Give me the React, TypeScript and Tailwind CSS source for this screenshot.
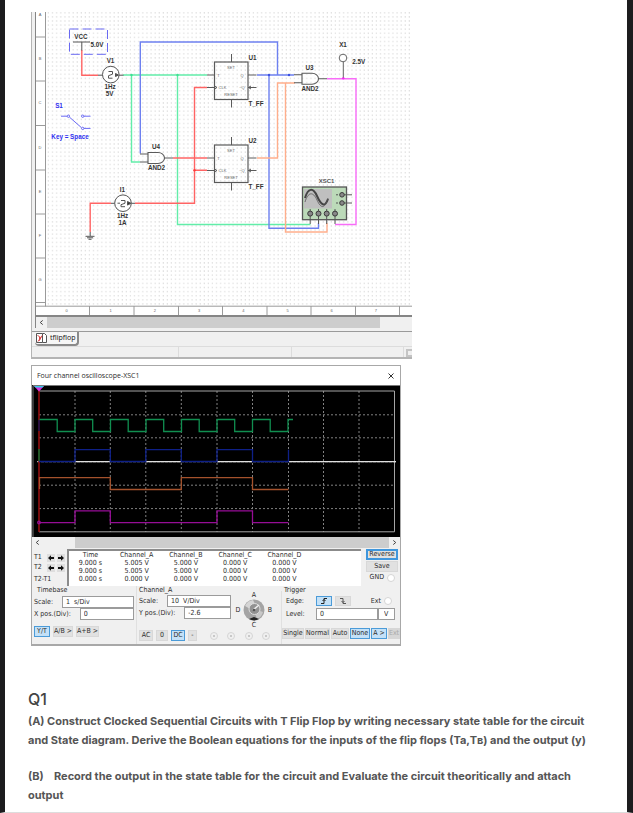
import React from "react";

type Pt = { x: number; y: number };

const dot = (x: number, y: number, fill: string) => (
  <circle key={`${x}-${y}`} cx={x} cy={y} r={1.2} fill={fill} />
);

function Label({ x, y, children, fill = "#333333", size = 6.3 }: Pt & { children: React.ReactNode; fill?: string; size?: number }) {
  return (
    <text x={x} y={y} fontSize={size} fontWeight="bold" textAnchor="middle" fill={fill} fontFamily="'Liberation Sans', Arial, sans-serif">
      {children}
    </text>
  );
}

function Small({ x, y, children, size = 4 }: Pt & { children: React.ReactNode; size?: number }) {
  return (
    <text x={x} y={y} fontSize={size} textAnchor="middle" fill="#666666" fontFamily="'Liberation Sans', Arial, sans-serif">
      {children}
    </text>
  );
}

function FlipFlop({ y, name }: { y: number; name: string }) {
  return (
    <g>
      <g fill="none" stroke="#5a5a5a" strokeWidth={1}>
        <rect x={214.5} y={y} width={33.5} height={37.5} strokeWidth={1.2} />
        <path d={`M231.5 ${y - 8}v8M231.5 ${y + 37.5}v8M207 ${y + 13}h7M207 ${y + 25.5}h8M248 ${y + 13}h8.5M248 ${y + 25.5}h8.5`} />
        <path d={`M214.5 ${y + 24}l2.5 1.5l-2.5 1.5M251 ${y + 24}l-2.5 1.5l2.5 1.5`} />
      </g>
      <Small x={231} y={y + 7}>SET</Small>
      <Small x={218.5} y={y + 14.5}>T</Small>
      <Small x={242} y={y + 14.5}>Q</Small>
      <Small x={222.5} y={y + 26.5}>CLK</Small>
      <Small x={242} y={y + 26.5}>~Q</Small>
      <Small x={231} y={y + 33.5}>RESET</Small>
      <Label x={252.5} y={y - 2}>{name}</Label>
      <Label x={256} y={y + 44}>T_FF</Label>
    </g>
  );
}

function AndGate({ x, y }: Pt) {
  return (
    <path
      d={`M${x - 8} ${y + 1.5}h8M${x - 8} ${y + 9.5}h8M${x + 16.5} ${y + 5.5}h8.5M${x} ${y}h10a6.5 5.5 0 0 1 0 11h-10z`}
      fill="none"
      stroke="#5a5a5a"
      strokeWidth={1.1}
    />
  );
}

function Schematic() {
  return (
    <svg viewBox="36 12 376 303" className="block h-auto w-full bg-white" role="img" aria-label="T flip-flop circuit schematic">
      <defs>
        <pattern id="grid" x="45" y="12" width="4.1" height="4.1" patternUnits="userSpaceOnUse">
          <rect x="3" y="0.3" width="1" height="1" fill="#c8c8c8" />
        </pattern>
      </defs>
      <rect x="46" y="12" width="366" height="294" fill="url(#grid)" />
      <path
        d="M45.5 12V306.5M36 306.2H412M36 37h9.5M36 81h9.5M36 125.5h9.5M36 170h9.5M36 214h9.5M36 258h9.5M36 302.5h9.5M89.5 306v9M134 306v9M178.5 306v9M222.5 306v9M267 306v9M311 306v9M355.5 306v9M399.5 306v9"
        stroke="#9a9a9a"
        fill="none"
      />
      {["A", "B", "C", "D", "E", "F", "G"].map((c, i) => (
        <Small key={c} x={40} y={16 + i * 44.2}>{c}</Small>
      ))}
      {[0, 1, 2, 3, 4, 5, 6, 7].map((n) => (
        <Small key={n} x={66.5 + n * 44.2} y={312}>{n}</Small>
      ))}

      <g fill="none" strokeWidth={1.4}>
        <g stroke="#62eda9">
          <path d="M123 75H207M131.5 75V162H140M177.5 75V224.5H310.5" />
        </g>
        <g stroke="#6d80f0">
          <path d="M140.3 153.5V42H277.5V75M257 75H294M269 75V228.3H318.5V223" />
        </g>
        <g stroke="#ff6464">
          <path d="M81.8 50V75.2H98M173 158H207M207 87.5H194.5V203.3H135M194.5 170.3H207M111 203.3H90.2V232" />
        </g>
        <g stroke="#ffae8c">
          <path d="M257 158H277.5V83H295M285.5 83V232H327V223" />
        </g>
        <g stroke="#f86cf8">
          <path d="M327 78.7H356V224.5H335" />
        </g>
      </g>
      {dot(131.5, 75, "#3fe093")}
      {dot(177.5, 75, "#3fe093")}
      {dot(269, 75, "#3b50e0")}
      {dot(289, 75, "#3b50e0")}
      {dot(194.5, 170.3, "#ff3b3b")}
      {dot(343.3, 78.3, "#f32cf3")}

      {/* supply */}
      <rect x="69.5" y="29" width="38" height="25.3" fill="none" stroke="#6969f2" strokeDasharray="9 4" />
      <path d="M73 42h17M81.8 42v8.5" stroke="#555" fill="none" />
      <Label x={81} y={38.8}>VCC</Label>
      <Label x={97} y={47.3}>5.0V</Label>

      {/* clock sources */}
      <g fill="white" stroke="#555">
        <path d="M98 75.2h5M119 75.2h4.5M111 203.3h4M131 203.3h4" />
        <circle cx="110.8" cy="74.6" r="8.3" />
        <circle cx="123" cy="203.2" r="8.3" />
        <path d="M108.500 71.500h4v2.700l-4 1.500v2.500h4" fill="none" />
        <path d="M115.500 73.500l3 1.500-3 1.500z" fill="#555" />
        <path d="M117.5 203.2h2.5M121 200.5h4v2.7l-4 1.5v2h4" fill="none" />
        <path d="M127.5 201.5l3.5 1.8-3.5 1.8z" fill="#333" />
      </g>
      <Label x={110.5} y={63.3}>V1</Label>
      <Label x={110} y={89.3}>1Hz</Label>
      <Label x={109.5} y={96.3}>5V</Label>
      <Label x={122.5} y={192}>I1</Label>
      <Label x={122.5} y={218}>1Hz</Label>
      <Label x={122.5} y={225.2}>1A</Label>
      <path d="M90.2 232v4M85.5 236.3h9M87 237.8h6M88.5 239.3h3" stroke="#555" fill="none" />

      {/* switch */}
      <g fill="none" stroke="#6a6af5">
        <path d="M61 116.2h6M69.5 117.2l11.8 10.3M84 116.2h6.5M84 128.4h6.5" />
        <circle cx="68.4" cy="116.2" r="1.2" />
        <circle cx="82.7" cy="116.2" r="1.2" />
        <circle cx="82.7" cy="128.4" r="1.2" />
      </g>
      <Label x={59} y={107.8} fill="#3030f0">S1</Label>
      <Label x={70} y={139} fill="#3030f0">Key = Space</Label>

      <FlipFlop y={62} name="U1" />
      <FlipFlop y={145} name="U2" />
      <AndGate x={148} y={152.5} />
      <Label x={156} y={149}>U4</Label>
      <Label x={156.5} y={169.5}>AND2</Label>
      <AndGate x={302} y={73.3} />
      <Label x={309.5} y={70.3}>U3</Label>
      <Label x={310} y={90.8}>AND2</Label>

      {/* probe */}
      <circle cx="343" cy="58" r="3.8" fill="white" stroke="#666" />
      <path d="M343.3 62v15.5" stroke="#666" />
      <Label x={343} y={46.8}>X1</Label>
      <Label x={358.8} y={63.8}>2.5V</Label>

      {/* oscilloscope instrument */}
      <Label x={326.5} y={183} fill="#555" size={6}>XSC1</Label>
      <rect x="302.5" y="187" width="44" height="32.7" fill="#bcdab9" stroke="#555" strokeWidth="1.3" />
      <rect x="304" y="189" width="28" height="19.5" fill="#bfbfbf" />
      <path d="M305 198c3-10 8-11 12-2s8 12 11 3" fill="none" stroke="#444" strokeWidth="2" />
      <path d="M305 202c3-10 8-11 12-2s8 9 11-2" fill="none" stroke="#555" strokeWidth="0.8" />
      {[310.2, 318.5, 326.7, 335].map((x) => (
        <g key={x}>
          <path d={`M${x} 209v15`} stroke="#555" />
          <circle cx={x} cy="213.6" r="2.5" fill="#888" stroke="#3b3b3b" />
        </g>
      ))}
      {[194.8, 203].map((y) => (
        <g key={y}>
          <path d={`M336 ${y}h2M342 ${y}h10`} stroke="#555" />
          <circle cx="342" cy={y} r="2.3" fill="#888" stroke="#3b3b3b" />
        </g>
      ))}
    </svg>
  );
}

function ScrollBar({ thumb }: { thumb: string }) {
  return (
    <div className="flex h-[11px] items-stretch bg-[#f0f0f0]">
      <button aria-label="Scroll left" className="flex w-[11px] items-center justify-center">
        <svg viewBox="0 0 6 6" className="size-[5px]"><path d="M4.500 .5L1.500 3l3 2.500" fill="none" stroke="#444" strokeWidth="1.200" /></svg>
      </button>
      <div className={`bg-[#cdcdcd] ${thumb}`} />
    </div>
  );
}

function CircuitWindow() {
  return (
    <section className="w-full max-w-[381px] border-b-2 border-l border-[#b4b4b4] bg-[#f0f0f0]">
      <div className="ml-[3px] border-b-2 border-l border-[#858585]">
        <Schematic />
      </div>
      <div className="ml-[3px] border-l border-[#858585]">
        <ScrollBar thumb="mr-8 flex-1" />
      </div>
      <div className="mt-[3px] flex border-t border-[#9a9a9a]">
        <button className="ml-[3px] flex h-[14px] items-center gap-[3px] rounded-b-sm border-r-2 border-b-2 border-[#8a8a8a] bg-[#f6f6f6] px-px font-['Noto_Sans',sans-serif] text-[7px] text-[#222]">
          <svg viewBox="0 0 11 10" className="h-[10px] w-[11px]">
            <path d="M.5.5h6v9h-6zM6.500.5h2l2 2v7h-4" fill="white" stroke="#555" />
            <path d="M1.500 2.500l2 1v4l2-4M2 8.500l4-6" fill="none" stroke="#dc4646" />
          </svg>
          tflipflop
        </button>
      </div>
      <div className="flex h-[11px] border-t border-[#dcdcdc]">
        <div className="flex-[147] border-r border-[#dcdcdc]" />
        <div className="flex-[112] border-r border-[#dcdcdc]" />
        <div className="flex-[112] border-r border-[#dcdcdc]" />
        <div className="mt-[2px] ml-[2px] w-[6px] border-2 border-r-0 border-[#c4c4c4]" />
      </div>
    </section>
  );
}

const columns = [75, 110.3, 145.8, 181.3, 217, 252.5, 288.5, 323.5, 359];
const squareWave = (() => {
  let d = "M39.500 419.500";
  for (let i = 0; i < 7; i++) {
    const left = 39.5 + i * 35.5;
    d += `H${left + 17.7}V431.5H${left + 35.5}V419.5`;
  }
  return d + "H293";
})();

function ScopeScreen() {
  return (
    <svg viewBox="32 385 368 152" className="block h-auto w-full bg-black" role="img" aria-label="Oscilloscope traces">
      <path d="M33 537V385.500H400" fill="none" stroke="#777" />
      <g fill="none" stroke="#818181" strokeDasharray="2 2">
        {columns.map((x) => <path key={x} d={`M${x} 391V532`} />)}
        {[414.8, 437.8, 485.2, 508.6].map((y) => <path key={y} d={`M39 ${y}H394`} />)}
      </g>
      <path d="M39 391H394.500V531.800H39" fill="none" stroke="#a5a5a5" />
      <path d="M37 461.700H396" stroke="#cfcfcf" strokeDasharray="3 1" />
      <path d="M75 461.700H110M146 461.700H181M217 461.700H252M289 461.700H396" stroke="#e0e0e0" strokeWidth="1.200" />
      <g fill="none" strokeWidth="1.300">
        <path d="M39 389V532" stroke="#9c1212" strokeWidth="1.500" />
        <path d="M39 420V431" stroke="#101050" strokeWidth="1.500" />
        <path d="M39 449V461" stroke="#087030" strokeWidth="1.500" />
        <path d={squareWave} stroke="#108f50" />
        <path d="M39 461.500H75V449.700H110.300V461.500H145.800V449.700H181.300V461.500H217V449.700H252.500V461.500H288.500V449.700" stroke="#0e2088" />
        <path d="M39.500 489V477.700H110.300V489.500H181.300V477.700H252.500V489.500H288.500" stroke="#a5522c" />
        <path d="M39 522.600H75V510.800H110.300V522.600H217V510.800H252.500V522.600H288.500" stroke="#960d96" />
        <circle cx="39" cy="522.500" r="1.300" stroke="#960d96" />
      </g>
      <path d="M34 386h10l-5 5.500z" fill="#d930e0" />
      <path d="M34 386h10l-1.500 1.600h-7z" fill="#35c8e6" />
    </svg>
  );
}

const buttonBase = "flex items-center justify-center leading-none whitespace-nowrap";
const plain = "border border-[#d8d8d8] bg-[#e1e1e1]";
const active = "border border-[#4b9bd8] bg-[#c4e1f7]";
const focused = "border-2 border-[#3f96dc] bg-[#e1e1e1]";

function Btn({ children, on, focus, size = "", label }: { children: React.ReactNode; on?: boolean; focus?: boolean; size?: string; label?: string }) {
  return (
    <button aria-label={label} aria-pressed={on} className={`${buttonBase} ${on ? active : focus ? focused : plain} ${size}`}>
      {children}
    </button>
  );
}

function Field({ id, label, value, top = "" }: { id: string; label: string; value: string; top?: string }) {
  return (
    <div className={`flex h-[12px] items-center ${top}`}>
      <label htmlFor={id} className="mr-[9px] whitespace-nowrap">{label}</label>
      <input id={id} defaultValue={value} className="h-[12px] w-0 min-w-0 flex-1 border border-[#9b9b9b] bg-white px-[3px]" />
    </div>
  );
}

function Radio({ name, label }: { name: string; label: string }) {
  return <input type="radio" name={name} aria-label={label} className="size-[8px] appearance-none rounded-full border border-[#d5d5d5] bg-white" />;
}

function Arrows({ name }: { name: string }) {
  return (
    <span className="flex gap-[2px]">
      {["back", "forward"].map((dir) => (
        <button key={dir} aria-label={`${name} ${dir}`} className="flex size-[8px] items-center justify-center bg-[#dedede]">
          <svg viewBox="0 0 6 6" className={dir === "back" ? "size-[6px]" : "size-[6px] rotate-180"}>
            <path d="M0 3l3-2.800v1.800h3v2h-3v1.800z" fill="#111" />
          </svg>
        </button>
      ))}
    </span>
  );
}

const headers = ["Time", "Channel_A", "Channel_B", "Channel_C", "Channel_D"];
const rows = [
  ["9.000 s", "5.005 V", "5.000 V", "0.000 V", "0.000 V"],
  ["9.000 s", "5.005 V", "5.000 V", "0.000 V", "0.000 V"],
  ["0.000 s", "0.000 V", "0.000 V", "0.000 V", "0.000 V"],
];

function Readout() {
  return (
    <div className="flex pt-px">
      <div className="flex w-[35px] flex-col gap-px pt-[4px] pl-[2px]">
        <div className="flex h-[9px] items-center justify-between pr-[2px]"><span>T1</span><Arrows name="T1" /></div>
        <div className="flex h-[9px] items-center justify-between pr-[2px]"><span>T2</span><Arrows name="T2" /></div>
        <span className="h-[9px] pt-[2px]">T2-T1</span>
      </div>
      <div className="h-[37px] flex-1 border-t-2 border-l-2 border-[#8b8b8b] bg-white">
        <table className="w-full max-w-[240px] table-fixed text-center leading-[8px]">
          <colgroup><col className="w-[43px]" /><col /><col /><col /><col /></colgroup>
          <thead><tr>{headers.map((h) => <th key={h} className="p-0 font-normal whitespace-nowrap">{h}</th>)}</tr></thead>
          <tbody>{rows.map((r, i) => <tr key={i}>{r.map((c, j) => <td key={j} className="p-0 whitespace-nowrap">{c}</td>)}</tr>)}</tbody>
        </table>
      </div>
      <div className="flex w-[39px] flex-col gap-px pr-[2px] pl-[5px]">
        <Btn focus size="h-[11px]">Reverse</Btn>
        <Btn size="h-[11px]">Save</Btn>
        <label className="flex items-center justify-end gap-[3px] pr-[3px]">GND <Radio name="ground" label="GND" /></label>
      </div>
    </div>
  );
}

function Knob() {
  return (
    <div className="grid w-[42px] grid-cols-[10px_22px_10px] grid-rows-[8px_22px_8px] place-items-center">
      <span className="col-start-2">A</span>
      <span className="col-start-1 row-start-2">D</span>
      <svg viewBox="0 0 22 22" className="col-start-2 row-start-2 size-[22px]" role="img" aria-label="Channel selector">
        <circle cx="11" cy="11" r="10.500" fill="#a4a4a4" />
        <path d="M2 7a10 10 0 0 1 8-6l3 6-4 4z" fill="#d5d5d5" />
        <path d="M20 13a10 10 0 0 1-6 7l-2-6 2-3z" fill="#c8c8c8" />
        <path d="M6 20a10 10 0 0 0 10 0l-5-2z" fill="#222" />
        <circle cx="11.500" cy="10" r="5.500" fill="#929292" stroke="#ddd" />
        <path d="M10 11l6-5" stroke="#eee" strokeWidth="1.500" />
        <circle cx="11" cy="11" r="1.300" fill="#555" />
      </svg>
      <span className="col-start-3 row-start-2">B</span>
      <span className="col-start-2 row-start-3">C</span>
    </div>
  );
}

function Controls() {
  return (
    <div className="flex h-[58px] gap-[2px]">
      <fieldset className="w-[102px]">
        <legend className="ml-[4px] h-[9px] pl-px">Timebase</legend>
        <div className="pl-[2px]">
          <Field id="time-scale" label="Scale:" value="1  s/Div" top="mt-px" />
          <Field id="x-pos" label="X pos.(Div):" value="0" />
        </div>
        <div className="mt-[6px] flex gap-[3px] pl-[2px]">
          <Btn on size="h-[11px] w-[16px]">Y/T</Btn>
          <Btn size="h-[11px] w-[20px]">A/B &gt;</Btn>
          <Btn size="h-[11px] w-[23px]">A+B &gt;</Btn>
        </div>
      </fieldset>
      <div className="flex min-w-0 flex-1 flex-col border-l border-[#e0e0e0] pl-[2px]">
        <div className="flex">
          <fieldset className="w-[92px]">
            <legend className="h-[9px]">Channel_A</legend>
            <Field id="channel-scale" label="Scale:" value="10  V/Div" />
            <Field id="y-pos" label="Y pos.(Div):" value="-2.6" />
          </fieldset>
          <div className="mt-[5px] ml-[2px]"><Knob /></div>
        </div>
        <div className="mt-px flex items-center gap-[3px]">
          <Btn size="h-[11px] w-[14px]">AC</Btn>
          <Btn size="h-[11px] w-[12px]">0</Btn>
          <Btn on size="h-[11px] w-[14px]">DC</Btn>
          <Btn size="h-[11px] w-[9px]">-</Btn>
          <div className="ml-[10px] flex flex-1 justify-between pr-[9px]">
            {["A", "B", "C", "D"].map((c) => (
              <span key={c} className="grid size-[8px] place-items-center rounded-full border border-[#d5d5d5]">
                <input type="radio" name="channel" aria-label={`Channel ${c}`} className="size-[2px] appearance-none rounded-full bg-[#bbbbbb]" />
              </span>
            ))}
          </div>
        </div>
      </div>
      <fieldset className="w-[119px] border-l border-[#e0e0e0]">
        <legend className="ml-[2px] h-[9px]">Trigger</legend>
        <div className="flex h-[12px] items-center pl-[4px]">
          <span className="w-[30px]">Edge:</span>
          <Btn on label="Rising edge" size="h-[10px] w-[16px]">
            <svg viewBox="0 0 8 6" className="h-[6px] w-[8px]"><path d="M1 5.500h3v-5h3M2.500 3l1.500-1.500L5.500 3" fill="none" stroke="#222" /></svg>
          </Btn>
          <Btn label="Falling edge" size="ml-[3px] h-[10px] w-[16px]">
            <svg viewBox="0 0 8 6" className="h-[6px] w-[8px]"><path d="M1 .5h3v5h3M2.500 3L4 4.500 5.500 3" fill="none" stroke="#555" /></svg>
          </Btn>
          <label className="ml-auto flex items-center gap-[3px] pr-[8px]">Ext <Radio name="external" label="External trigger" /></label>
        </div>
        <div className="mt-px flex h-[12px] items-center pr-[5px] pl-[4px]">
          <label htmlFor="level" className="w-[30px]">Level:</label>
          <input id="level" defaultValue="0" className="h-[12px] w-0 min-w-0 flex-1 border border-[#9b9b9b] bg-white px-[3px]" />
          <select aria-label="Level unit" className="h-[12px] w-[17px] appearance-none border border-[#9b9b9b] bg-white pl-[5px]"><option>V</option></select>
        </div>
        <div className="mt-[8px] flex gap-px">
          <Btn size="h-[11px] w-[22px]">Single</Btn>
          <Btn size="h-[11px] w-[25px]">Normal</Btn>
          <Btn size="h-[11px] w-[18px]">Auto</Btn>
          <Btn on size="h-[11px] w-[20px]">None</Btn>
          <Btn on size="h-[11px] w-[16px]">A &gt;</Btn>
          <button disabled className="h-[11px] w-[12px] bg-[#d6d6d6] leading-none text-[#aaaaaa]">Ext</button>
        </div>
      </fieldset>
    </div>
  );
}

function ScopeWindow() {
  return (
    <section className="mt-[6px] w-full max-w-[370px] border border-b-2 border-[#a8a8a8] bg-[#f0f0f0] font-['DejaVu_Sans_Condensed','DejaVu_Sans',sans-serif] text-[7px] leading-[9px] text-[#2c2c2c]">
      <header className="flex h-[19px] items-center justify-between bg-white pr-[5px] pl-[5px] font-['Open_Sans',sans-serif] text-[7px]">
        <h2>Four channel oscilloscope-XSC1</h2>
        <button aria-label="Close" className="p-px">
          <svg viewBox="0 0 6 6" className="size-[6px]"><path d="M.5.5l5 5M5.500.5l-5 5" stroke="#333" /></svg>
        </button>
      </header>
      <ScopeScreen />
      <div className="flex">
        <div className="min-w-0 flex-1"><ScrollBar thumb="ml-8 flex-1" /></div>
        <button aria-label="Scroll right" className="flex w-[11px] items-center justify-center">
          <svg viewBox="0 0 6 6" className="size-[5px] rotate-180"><path d="M4.500.5L1.500 3l3 2.500" fill="none" stroke="#444" strokeWidth="1.200" /></svg>
        </button>
      </div>
      <Readout />
      <Controls />
    </section>
  );
}

export default function App() {
  return (
    <main className="min-h-screen border-r-[6px] border-b border-l-[5px] border-r-[#1c1c1e] border-b-[#dddddd] border-l-[#1c1c1e] bg-white pt-3">
      <div className="pr-4 pl-[26px]">
        <CircuitWindow />
        <ScopeWindow />
      </div>
      <article className="mt-[43px] pr-[28px] pl-[23px] font-['Inter',sans-serif] text-[11px] leading-[19px] font-bold text-[#555555]">
        <h1 className="text-[16px] leading-[20px] font-medium text-[#444444]">Q1</h1>
        <p className="mt-[3px]">
          (A) Construct Clocked Sequential Circuits with T Flip Flop by writing necessary state table for the circuit and State diagram. Derive the Boolean equations for the inputs of the flip flops (Ta,Tʙ) and the output (y)
        </p>
        <p className="mt-[17px]">
          {"(B)\u00a0\u00a0\u00a0 Record the output in the state table for the circuit and Evaluate the circuit theoritically and attach output"}
        </p>
      </article>
    </main>
  );
}
